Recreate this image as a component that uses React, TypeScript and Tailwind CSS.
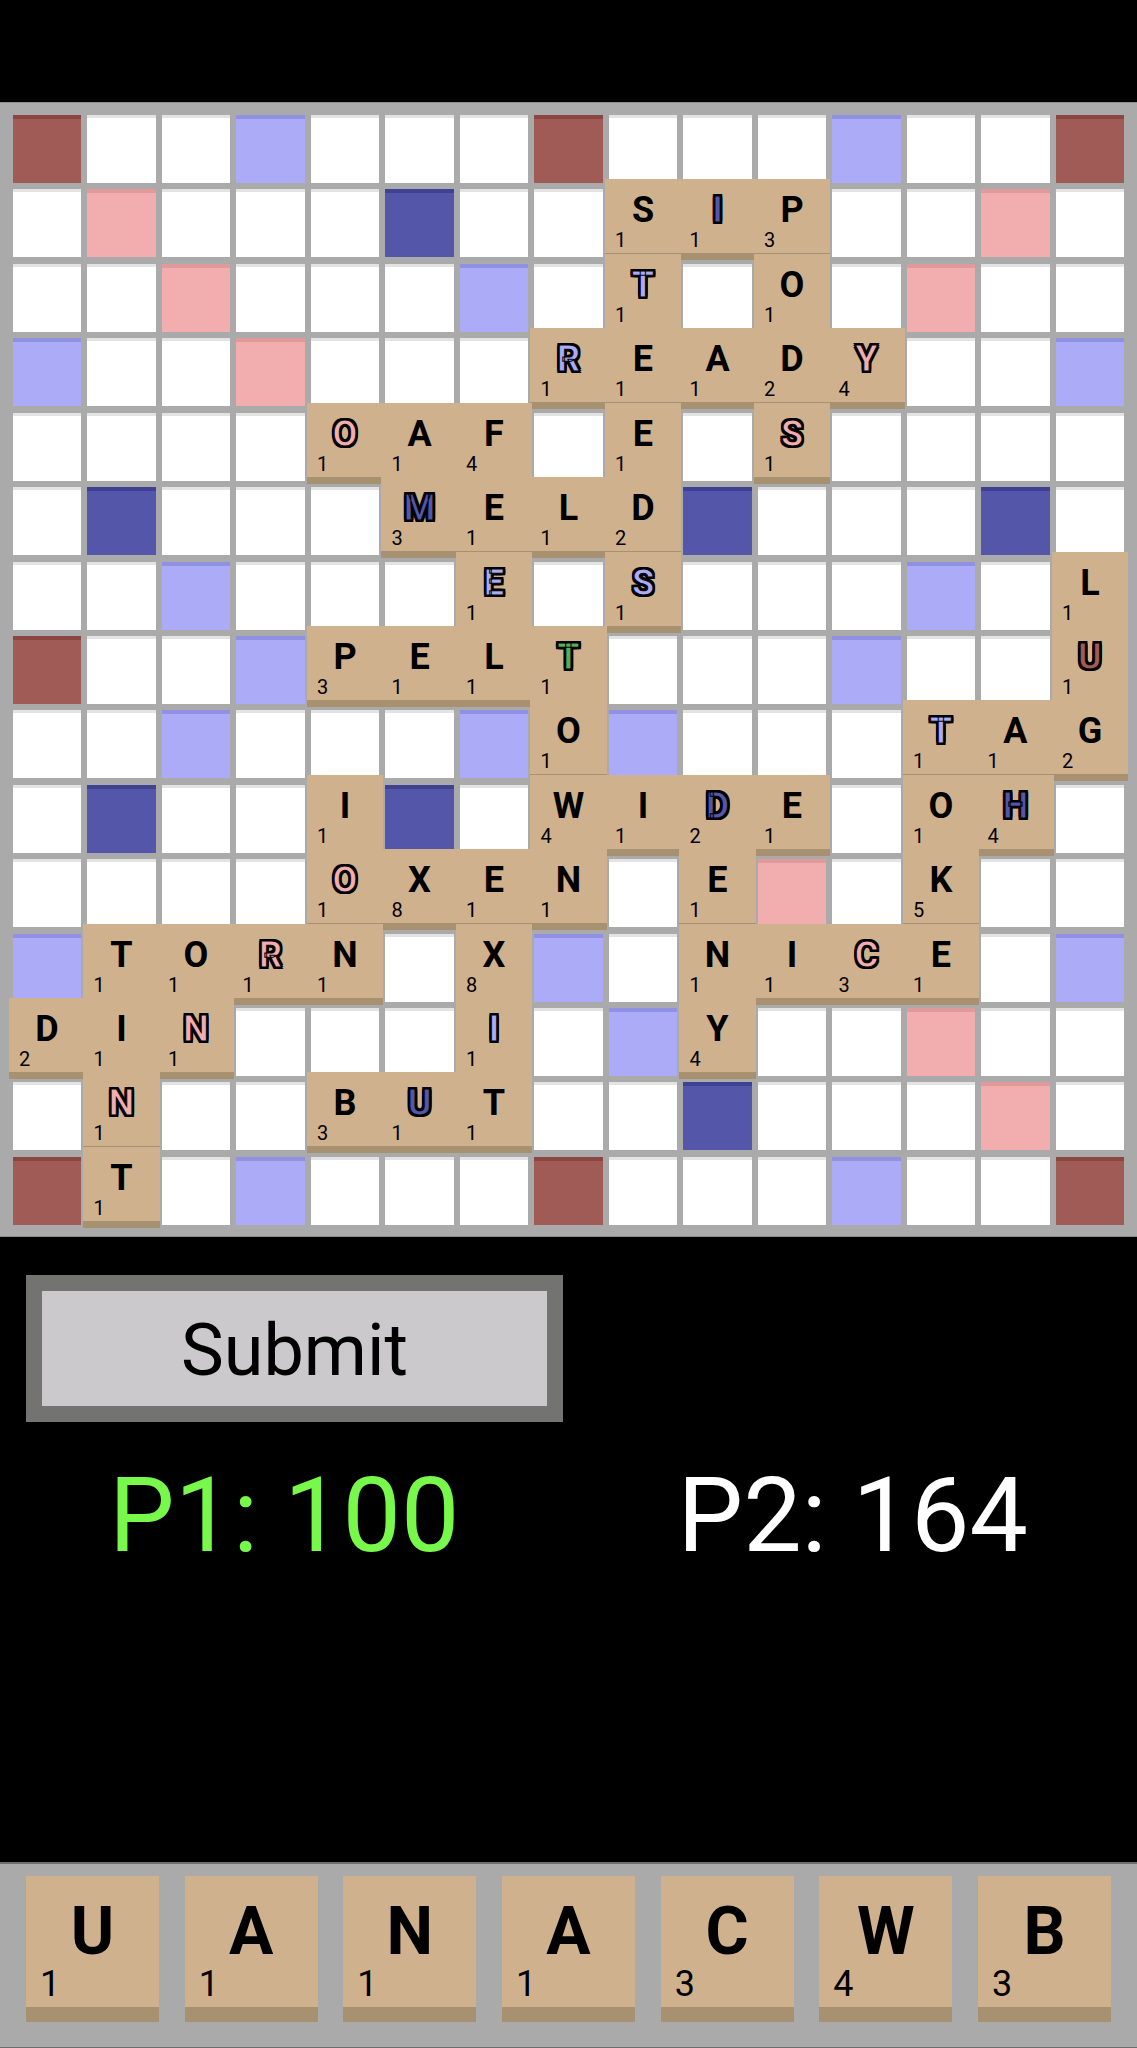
import React from "react";

type Premium = "none" | "tw" | "dw" | "tl" | "dl" | "star";

const TW = ["0,0", "0,7", "0,14", "7,0", "7,14", "14,0", "14,7", "14,14"];
const DW = [
  "1,1", "2,2", "3,3", "4,4", "1,13", "2,12", "3,11", "4,10",
  "13,1", "12,2", "11,3", "10,4", "13,13", "12,12", "11,11", "10,10",
];
const TL = ["1,5", "1,9", "5,1", "5,5", "5,9", "5,13", "9,1", "9,5", "9,9", "9,13", "13,5", "13,9"];
const DL = [
  "0,3", "0,11", "2,6", "2,8", "3,0", "3,7", "3,14", "6,2", "6,6", "6,8", "6,12",
  "7,3", "7,11", "8,2", "8,6", "8,8", "8,12", "11,0", "11,7", "11,14",
  "12,6", "12,8", "14,3", "14,11",
];

const BOARD = [
  "...............",
  "........SIP....",
  "........T.O....",
  ".......READY...",
  "....OAF.E.S....",
  ".....MELD......",
  "......E.S.....L",
  "....PELT......U",
  ".......O....TAG",
  "....I..WIDE.OH.",
  "....OXEN.E..K..",
  ".TORN.X..NICE..",
  "DIN...I..Y.....",
  ".N..BUT........",
  ".T.............",
];

const RACK = ["U", "A", "N", "A", "C", "W", "B"];

const SCORES: Record<string, number> = {
  A: 1, B: 3, C: 3, D: 2, E: 1, F: 4, G: 2, H: 4, I: 1, J: 8, K: 5, L: 1, M: 3,
  N: 1, O: 1, P: 3, Q: 10, R: 1, S: 1, T: 1, U: 1, V: 4, W: 4, X: 8, Y: 4, Z: 10,
};

function premiumAt(r: number, c: number): Premium {
  const key = `${r},${c}`;
  if (r === 7 && c === 7) return "star";
  if (TW.includes(key)) return "tw";
  if (DW.includes(key)) return "dw";
  if (TL.includes(key)) return "tl";
  if (DL.includes(key)) return "dl";
  return "none";
}

const cellStyle: Record<Premium, string> = {
  none: "bg-white shadow-[inset_0_3px_0_#e3e3e3]",
  tw: "bg-[#a15b56] shadow-[inset_0_4px_0_#8a4641]",
  dw: "bg-[#f2aeae] shadow-[inset_0_4px_0_#e09a9a]",
  tl: "bg-[#5356a9] shadow-[inset_0_4px_0_#3f4193]",
  dl: "bg-[#acabf7] shadow-[inset_0_4px_0_#9191e4]",
  star: "bg-[#5aaa5a] shadow-[inset_0_4px_0_#468f46]",
};

// outlined letters on premium squares
const outline =
  "[-webkit-text-stroke:1px_#000] [text-shadow:-2px_-2px_0_#000,2px_-2px_0_#000,-2px_2px_0_#000,2px_2px_0_#000,0_2px_0_#000,0_-2px_0_#000,2px_0_0_#000,-2px_0_0_#000]";

const letterStyle: Record<Premium, string> = {
  none: "text-black",
  tw: `text-[#a15b56] ${outline}`,
  dw: `text-[#f2aeae] ${outline}`,
  tl: `text-[#5356a9] ${outline}`,
  dl: `text-[#acabf7] ${outline}`,
  star: `text-[#5aaa5a] ${outline}`,
};

function Cell({ r, c }: { r: number; c: number }) {
  const premium = premiumAt(r, c);
  const ch = BOARD[r][c];
  const hasTile = ch !== ".";

  return (
    <div className={`relative h-[68px] ${cellStyle[premium]}`}>
      {hasTile && (
        <>
          <div className="absolute -top-[10px] -bottom-[3px] -left-[4px] -right-[4px] z-10 bg-[#d0b18e]">
            <div className="absolute inset-x-0 bottom-0 h-[7px] bg-[#a89170]" />
          </div>
          <span
            className={`absolute inset-x-0 top-[3px] z-20 text-center text-[36px] font-bold leading-none ${letterStyle[premium]}`}
          >
            {ch}
          </span>
          <span className="absolute left-[6px] top-[41px] z-20 text-[20px] leading-none text-black">
            {SCORES[ch]}
          </span>
        </>
      )}
    </div>
  );
}

function RackTile({ letter }: { letter: string }) {
  return (
    <div className="relative w-[133px] h-[146px] bg-[#d0b18e]">
      <span className="absolute inset-x-0 top-[23px] text-center text-[66px] font-bold leading-none text-black">
        {letter}
      </span>
      <span className="absolute left-[14px] top-[90px] text-[36px] leading-none text-black">
        {SCORES[letter]}
      </span>
      <div className="absolute inset-x-0 bottom-0 h-[15px] bg-[#a89170]" />
    </div>
  );
}

export default function App() {
  return (
    <div className="flex flex-col w-[1137px] h-[2048px] bg-black font-['Roboto',sans-serif] overflow-hidden">
      <div className="h-[102px] shrink-0" />

      <div className="h-[1135px] shrink-0 bg-[#abaaab] border-y border-[#8c8a8c] pt-[12px] px-[13px]">
        <div className="grid grid-cols-[repeat(15,minmax(0,1fr))] gap-[6.43px]">
          {BOARD.map((row, r) =>
            row.split("").map((_, c) => <Cell key={`${r}-${c}`} r={r} c={c} />)
          )}
        </div>
      </div>

      <div className="mt-[38px] ml-[26px] w-[537px] h-[147px] border-[16px] border-[#737471] bg-[#cbc9cc] flex items-center justify-center">
        <span className="text-[72px] leading-none text-black pt-[4px]">Submit</span>
      </div>

      <div className="mt-[42px] grid grid-cols-2">
        <div className="text-center text-[104px] leading-none text-[#77f84b]">P1: 100</div>
        <div className="text-center text-[104px] leading-none text-white">P2: 164</div>
      </div>

      <div className="mt-auto h-[186px] shrink-0 bg-[#abaaab] border-t-2 border-b border-[#6e6e6e] flex gap-[25.67px] px-[26px] pt-[12px]">
        {RACK.map((l, i) => (
          <RackTile key={i} letter={l} />
        ))}
      </div>
    </div>
  );
}
